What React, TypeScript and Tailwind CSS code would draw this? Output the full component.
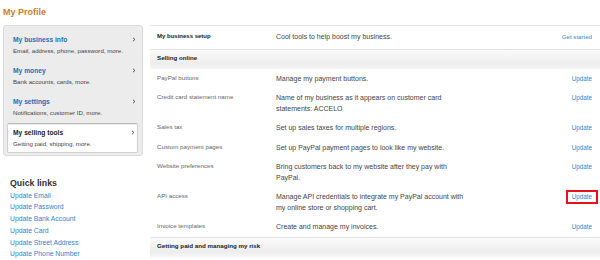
import React from "react";

const Chevron = () => (
  <svg width="4" height="5" viewBox="0 0 4 5" className="shrink-0">
    <path d="M1 0.8 L2.9 2.5 L1 4.2" fill="none" stroke="#444" strokeWidth="0.9" />
  </svg>
);

const navItems = [
  { title: "My business info", sub: "Email, address, phone, password, more." },
  { title: "My money", sub: "Bank accounts, cards, more." },
  { title: "My settings", sub: "Notifications, customer ID, more." },
];

const quickLinks = [
  "Update Email",
  "Update Password",
  "Update Bank Account",
  "Update Card",
  "Update Street Address",
  "Update Phone Number",
];

type Row = { label: string; desc: string; link: string; boxed?: boolean };

const sellingRows: Row[] = [
  { label: "PayPal buttons", desc: "Manage my payment buttons.", link: "Update" },
  {
    label: "Credit card statement name",
    desc: "Name of my business as it appears on customer card statements: ACCELO",
    link: "Update",
  },
  { label: "Sales tax", desc: "Set up sales taxes for multiple regions.", link: "Update" },
  { label: "Custom payment pages", desc: "Set up PayPal payment pages to look like my website.", link: "Update" },
  {
    label: "Website preferences",
    desc: "Bring customers back to my website after they pay with PayPal.",
    link: "Update",
  },
  {
    label: "API access",
    desc: "Manage API credentials to integrate my PayPal account with my online store or shopping cart.",
    link: "Update",
    boxed: true,
  },
  { label: "Invoice templates", desc: "Create and manage my invoices.", link: "Update" },
];

function TableRow({ row }: { row: Row }) {
  return (
    <div className="flex items-start pl-[7px] pr-[8px] py-[4.5px]">
      <div className="w-[119px] shrink-0 text-[6.2px] leading-[7.5px] text-[#666]">{row.label}</div>
      <div className="w-[190px] shrink-0 text-[7px] leading-[10.5px] text-[#444]">{row.desc}</div>
      <div className="flex-1 flex justify-end">
        <span className="relative text-[6.3px] leading-[10.5px] text-[#2f86cc]">
          {row.link}
          {row.boxed && (
            <span className="absolute left-[-6px] right-[-6px] top-[-2.5px] bottom-[-1.5px] border-2 border-[#e5141c]" />
          )}
        </span>
      </div>
    </div>
  );
}

function SectionHeader({ title }: { title: string }) {
  return (
    <div className="border-t border-[#e2e2e2] bg-gradient-to-b from-[#fbfbfb] via-[#ededed] via-70% to-[#f5f5f5] pl-[7px] pt-[3px] pb-[6px]">
      <div className="text-[6.2px] leading-[10px] font-bold text-[#222]">{title}</div>
    </div>
  );
}

export default function App() {
  return (
    <div className="w-[600px] h-[260px] overflow-hidden bg-white pt-[6px] font-['Liberation_Sans',Arial,Helvetica,sans-serif]">
      <h1 className="pl-[3px] h-[13px] text-[9px] leading-[13px] font-bold text-[#d27c2c]">My Profile</h1>
      <div className="mt-[6px] flex">
        {/* Left column */}
        <div className="ml-[3px] w-[140px] shrink-0">
          <div className="rounded-[3px] border border-[#dadada] bg-[#ececec] pt-[3px] pb-[2px]">
            {navItems.map((it) => (
              <div key={it.title} className="pl-[9px] pr-[6px] py-[5.5px]">
                <div className="flex items-center justify-between h-[9px]">
                  <span className="text-[6.7px] leading-[9px] font-bold text-[#1b6fb8]">{it.title}</span>
                  <Chevron />
                </div>
                <div className="mt-[2px] text-[6.15px] leading-[9px] text-[#444]">{it.sub}</div>
              </div>
            ))}
            <div className="ml-[3px] mr-[4px] mt-[0.5px] rounded-[2px] border border-[#cfcfcf] border-t-[#b9b9b9] bg-white pl-[5px] pr-[2px] py-[4px] shadow-[inset_0_1px_1px_rgba(0,0,0,0.08)]">
              <div className="flex items-center justify-between h-[9px]">
                <span className="text-[6.7px] leading-[9px] font-bold text-[#222]">My selling tools</span>
                <Chevron />
              </div>
              <div className="mt-[2px] text-[6.15px] leading-[9px] text-[#444]">Getting paid, shipping, more.</div>
            </div>
          </div>
          <div className="pl-[7px] mt-[22.5px]">
            <div className="text-[8.8px] leading-[11px] font-bold text-[#333]">Quick links</div>
            <div className="mt-[0.5px] flex flex-col">
              {quickLinks.map((l) => (
                <span key={l} className="text-[6.8px] leading-[11.8px] text-[#2f86cc]">
                  {l}
                </span>
              ))}
            </div>
          </div>
        </div>

        {/* Right column */}
        <div className="ml-[7px] flex-1 border-t border-[#e6e6e6]">
          <div className="flex items-start pl-[7px] pr-[8px] pt-[5.75px] pb-[7px]">
            <div className="w-[119px] shrink-0 text-[6px] leading-[9px] mt-[0.5px] font-bold text-[#222]">My business setup</div>
            <div className="flex-1 text-[7px] leading-[10.5px] text-[#444]">Cool tools to help boost my business.</div>
            <span className="text-[6.1px] leading-[10.5px] text-[#2f86cc]">Get started</span>
          </div>
          <SectionHeader title="Selling online" />
          {sellingRows.map((r) => (
            <TableRow key={r.label} row={r} />
          ))}
          <SectionHeader title="Getting paid and managing my risk" />
        </div>
      </div>
    </div>
  );
}
